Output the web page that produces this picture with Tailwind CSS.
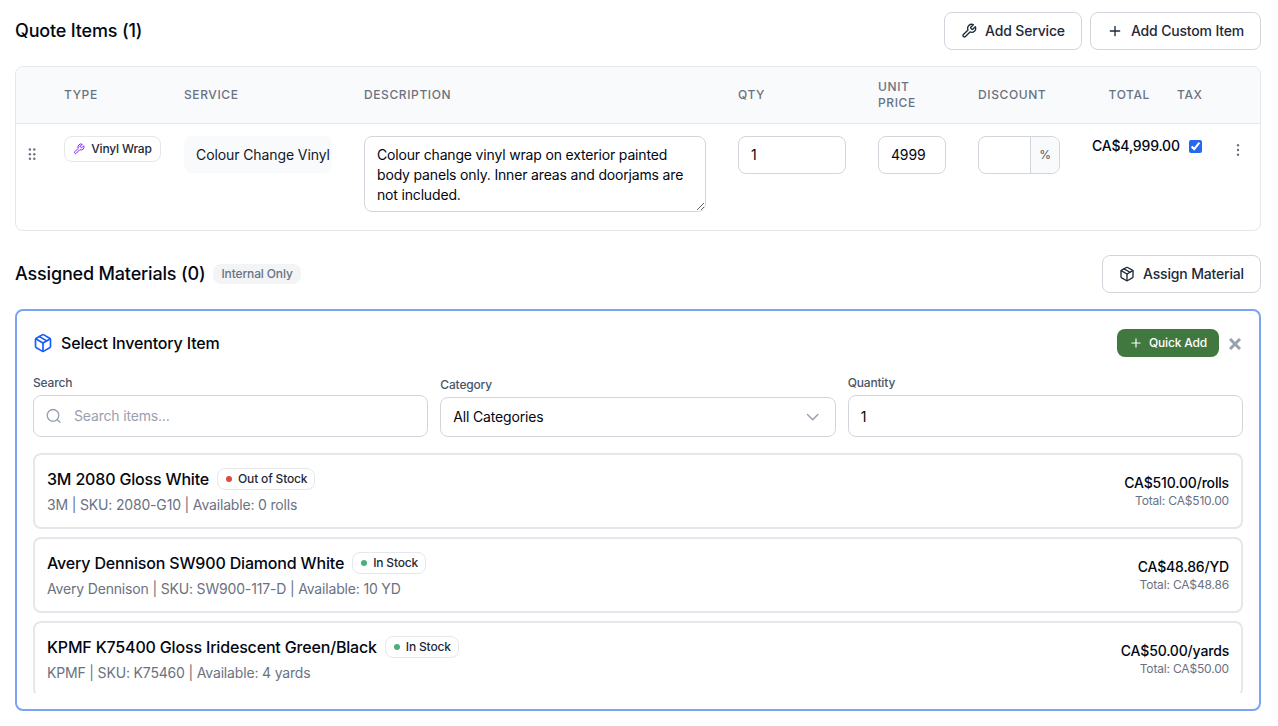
<!DOCTYPE html>
<html lang="en">
<head>
  <meta charset="UTF-8" />
  <meta name="viewport" content="width=device-width, initial-scale=1.0"/>
  <title>Quote Items</title>
  <script src="https://cdn.jsdelivr.net/npm/@tailwindcss/browser@4"></script>
</head>
<body class="bg-white font-['Inter',sans-serif] tracking-[-0.17px] text-gray-950 h-[726px] overflow-hidden pl-[15px] pr-[17px] pt-3">

  <!-- icons -->
  <svg class="hidden">
    <symbol id="wrench" viewBox="0 0 24 24" fill="none" stroke="currentColor" stroke-width="2" stroke-linecap="round" stroke-linejoin="round">
      <path d="M14.7 6.3a1 1 0 0 0 0 1.4l1.6 1.6a1 1 0 0 0 1.4 0l3.77-3.77a6 6 0 0 1-7.94 7.94l-6.91 6.91a2.12 2.12 0 0 1-3-3l6.91-6.91a6 6 0 0 1 7.94-7.94l-3.76 3.76z"/>
    </symbol>
    <symbol id="plus" viewBox="0 0 24 24" fill="none" stroke="currentColor" stroke-width="2" stroke-linecap="round">
      <path d="M5 12h14M12 5v14"/>
    </symbol>
    <symbol id="package" viewBox="0 0 24 24" fill="none" stroke="currentColor" stroke-width="2" stroke-linecap="round" stroke-linejoin="round">
      <path d="M11 21.73a2 2 0 0 0 2 0l7-4A2 2 0 0 0 21 16V8a2 2 0 0 0-1-1.73l-7-4a2 2 0 0 0-2 0l-7 4A2 2 0 0 0 3 8v8a2 2 0 0 0 1 1.73z"/>
      <path d="M12 22V12"/>
      <path d="M3.3 7 12 12l8.7-5"/>
      <path d="m7.5 4.27 9 5.15"/>
    </symbol>
  </svg>

  <!-- quote items -->
  <div class="flex items-center justify-between">
    <h2 class="text-lg font-medium">Quote Items (1)</h2>
    <div class="flex gap-2">
      <button class="flex items-center justify-center w-[138px] h-[38px] border border-gray-300 rounded-lg text-sm font-medium text-gray-800">
        <svg class="size-4 mr-2"><use href="#wrench"/></svg>Add Service
      </button>
      <button class="flex items-center justify-center w-[171px] h-[38px] border border-gray-300 rounded-lg text-sm font-medium text-gray-800">
        <svg class="size-4 mr-2"><use href="#plus"/></svg>Add Custom Item
      </button>
    </div>
  </div>

  <div class="mt-4 h-[165px] border border-gray-200 rounded-lg overflow-hidden">
    <div class="grid grid-cols-[32px_120px_180px_374px_140px_100px_114px_90px_46px_1fr] items-center h-[57px] pb-px bg-gray-50 border-b border-gray-200 text-xs font-medium tracking-wider text-gray-500">
      <div></div>
      <div class="pl-4">TYPE</div>
      <div class="pl-4">SERVICE</div>
      <div class="pl-4">DESCRIPTION</div>
      <div class="pl-4">QTY</div>
      <div class="px-4">UNIT PRICE</div>
      <div class="pl-4">DISCOUNT</div>
      <div class="pr-4 text-right">TOTAL</div>
      <div class="pl-[11px]">TAX</div>
      <div></div>
    </div>
    <div class="grid grid-cols-[32px_120px_180px_374px_140px_100px_114px_90px_46px_1fr] items-start pt-3 text-sm">
      <div class="pt-3 flex justify-center">
        <svg class="w-2 h-3 text-gray-500" viewBox="0 0 8 12" fill="currentColor">
          <circle cx="1.9" cy="1.5" r="1.2"/><circle cx="6.3" cy="1.5" r="1.2"/>
          <circle cx="1.9" cy="6.2" r="1.2"/><circle cx="6.3" cy="6.2" r="1.2"/>
          <circle cx="1.9" cy="10.8" r="1.2"/><circle cx="6.3" cy="10.8" r="1.2"/>
        </svg>
      </div>
      <div class="pl-4">
        <span class="flex items-center justify-center gap-1.5 w-[97px] h-[26px] pb-px border border-gray-200 rounded-lg text-xs font-medium text-gray-800">
          <svg class="size-3 text-violet-600"><use href="#wrench"/></svg>Vinyl Wrap
        </span>
      </div>
      <div class="pl-4">
        <div class="w-[148px] h-[37px] pl-3 flex items-center bg-gray-50 rounded-lg overflow-hidden whitespace-nowrap tracking-[-0.1px] text-gray-900">Colour Change Vinyl</div>
      </div>
      <div class="px-4">
        <textarea rows="3" class="block w-full h-[76px] px-3 py-2 border border-gray-300 rounded-lg resize-y overflow-hidden">Colour change vinyl wrap on exterior painted body panels only. Inner areas and doorjams are not included.</textarea>
      </div>
      <div class="px-4"><input value="1" class="block w-full h-[38px] px-3 pb-0.5 border border-gray-300 rounded-lg"></div>
      <div class="px-4"><input value="4999" class="block w-full h-[38px] px-3 pb-0.5 border border-gray-300 rounded-lg"></div>
      <div class="px-4">
        <div class="flex h-[38px] border border-gray-300 rounded-lg overflow-hidden">
          <div class="flex-1"></div>
          <div class="w-[29px] flex items-center justify-center bg-gray-50 border-l border-gray-300 text-xs text-gray-600">%</div>
        </div>
      </div>
      <div class="pl-4 whitespace-nowrap font-medium">CA$4,999.00</div>
      <div class="pl-[23px] pt-1"><input type="checkbox" checked class="block size-[13px] accent-[#2569f0]"></div>
      <div class="pt-[7px] pl-1 flex justify-center">
        <svg class="size-3.5 text-gray-500" viewBox="0 0 14 14" fill="currentColor">
          <circle cx="7" cy="2.3" r="1.2"/><circle cx="7" cy="7" r="1.2"/><circle cx="7" cy="11.7" r="1.2"/>
        </svg>
      </div>
    </div>
  </div>

  <!-- materials -->
  <div class="mt-6 flex items-center justify-between">
    <div class="flex items-center gap-2">
      <h2 class="text-lg font-medium">Assigned Materials (0)</h2>
      <span class="px-2 py-0.5 rounded-lg bg-gray-100 text-xs font-medium tracking-[-0.13px] text-gray-500">Internal Only</span>
    </div>
    <button class="flex items-center justify-center w-[159px] h-[38px] border border-gray-300 rounded-lg text-sm font-medium text-gray-800">
      <svg class="size-4 mr-2"><use href="#package"/></svg>Assign Material
    </button>
  </div>

  <div class="mt-4 h-[402px] border-2 border-[#7ba4f4] rounded-lg px-4 pt-[18px]">
    <div class="flex items-center justify-between h-7">
      <h3 class="flex items-center gap-2 font-medium">
        <svg class="size-5 text-blue-600"><use href="#package"/></svg>Select Inventory Item
      </h3>
      <div class="flex items-center">
        <button class="flex items-center justify-center w-[102px] h-7 rounded-lg bg-[#41783f] text-white text-xs font-medium">
          <svg class="size-3.5 mr-1.5"><use href="#plus"/></svg>Quick Add
        </button>
        <svg class="ml-2.5 mr-0.5 mt-0.5 size-3 text-gray-400" viewBox="0 0 12 12" stroke="currentColor" stroke-width="3">
          <path d="M1 1l10 10M11 1L1 11"/>
        </svg>
      </div>
    </div>

    <div class="mt-[18px] grid grid-cols-3 gap-3 items-end">
      <div>
        <label class="block mb-1 text-xs font-medium text-gray-600">Search</label>
        <div class="flex items-center h-[42px] px-3 border border-gray-300 rounded-lg">
          <svg class="size-4 mr-3 text-gray-400" viewBox="0 0 24 24" fill="none" stroke="currentColor" stroke-width="2" stroke-linecap="round"><circle cx="10.5" cy="11" r="8.7"/><path d="m21 21.5-4-4"/></svg>
          <input placeholder="Search items..." class="flex-1 text-sm placeholder:text-gray-400">
        </div>
      </div>
      <div>
        <label class="block mb-1 text-xs font-medium text-gray-600">Category</label>
        <div class="flex items-center justify-between h-10 px-3 border border-gray-300 rounded-lg text-sm">
          All Categories
          <svg class="size-5 text-gray-400" viewBox="0 0 20 20" fill="none" stroke="currentColor" stroke-width="1.5" stroke-linecap="round" stroke-linejoin="round"><path d="m4.5 7.5 5.2 5.2 5.2-5.2"/></svg>
        </div>
      </div>
      <div>
        <label class="block mb-1 text-xs font-medium text-gray-600">Quantity</label>
        <input value="1" class="block w-full h-[42px] px-3 border border-gray-300 rounded-lg text-sm">
      </div>
    </div>

    <div class="mt-4 h-60 overflow-hidden flex flex-col gap-2">
      <div class="shrink-0 flex items-center justify-between h-[76px] px-3 border-2 border-gray-200 rounded-lg">
        <div>
          <div class="flex items-center gap-2">
            <h4 class="font-medium">3M 2080 Gloss White</h4>
            <span class="flex items-center gap-1.5 h-[22px] px-[7px] border border-gray-200 rounded-lg text-xs font-medium text-gray-800"><i class="size-1.5 ml-px rounded-full bg-[#dc4a41]"></i>Out of Stock</span>
          </div>
          <p class="mt-1 text-sm text-gray-500">3M | SKU: 2080-G10 | Available: 0 rolls</p>
        </div>
        <div class="text-right">
          <p class="text-sm font-medium">CA$510.00/rolls</p>
          <p class="text-xs text-gray-500">Total: CA$510.00</p>
        </div>
      </div>
      <div class="shrink-0 flex items-center justify-between h-[76px] px-3 border-2 border-gray-200 rounded-lg">
        <div>
          <div class="flex items-center gap-2">
            <h4 class="font-medium">Avery Dennison SW900 Diamond White</h4>
            <span class="flex items-center gap-1.5 h-[22px] px-[7px] border border-gray-200 rounded-lg text-xs font-medium text-gray-800"><i class="size-1.5 ml-px rounded-full bg-[#4caf7a]"></i>In Stock</span>
          </div>
          <p class="mt-1 text-sm text-gray-500">Avery Dennison | SKU: SW900-117-D | Available: 10 YD</p>
        </div>
        <div class="text-right">
          <p class="text-sm font-medium">CA$48.86/YD</p>
          <p class="text-xs text-gray-500">Total: CA$48.86</p>
        </div>
      </div>
      <div class="shrink-0 flex items-center justify-between h-[76px] px-3 border-2 border-gray-200 rounded-lg">
        <div>
          <div class="flex items-center gap-2">
            <h4 class="font-medium">KPMF K75400 Gloss Iridescent Green/Black</h4>
            <span class="flex items-center gap-1.5 h-[22px] px-[7px] border border-gray-200 rounded-lg text-xs font-medium text-gray-800"><i class="size-1.5 ml-px rounded-full bg-[#4caf7a]"></i>In Stock</span>
          </div>
          <p class="mt-1 text-sm text-gray-500">KPMF | SKU: K75460 | Available: 4 yards</p>
        </div>
        <div class="text-right">
          <p class="text-sm font-medium">CA$50.00/yards</p>
          <p class="text-xs text-gray-500">Total: CA$50.00</p>
        </div>
      </div>
    </div>
  </div>

</body>
</html>
